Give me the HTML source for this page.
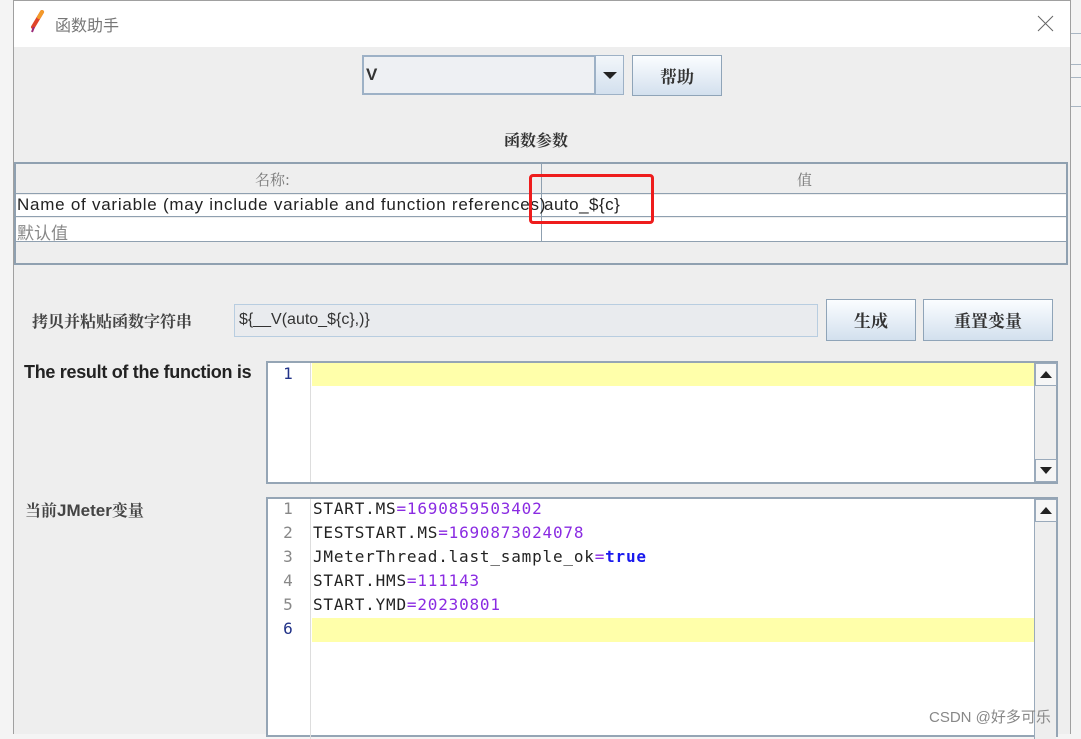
<!DOCTYPE html>
<html><head><meta charset="utf-8"><style>
*{margin:0;padding:0;box-sizing:border-box}
body{width:1081px;height:734px;overflow:hidden;background:#f4f4f4;position:relative;font-family:"Liberation Sans","Noto Sans CJK SC",sans-serif}
.a{position:absolute}
.win{left:13px;top:0;width:1058px;height:734px;background:#eeeeee;border-left:1px solid #a0a0a0;border-right:1px solid #a0a0a0;border-top:1px solid #a0a0a0}
.title{left:14px;top:1px;width:1056px;height:46px;background:#fff}
.btn{border:1px solid #8fa4b8;background:linear-gradient(#fbfdff,#d3e0ee);font-family:"Noto Serif CJK SC",serif;font-weight:bold;font-size:17px;color:#333;text-align:center}
.cell{font-size:17px;color:#222;white-space:nowrap}
.mono{font-family:"DejaVu Sans Mono","Liberation Mono",monospace;font-size:16px;letter-spacing:0.8px;color:#222}
.num{color:#8a2be2}
.ln{font-family:"DejaVu Sans Mono",monospace;font-size:16px;color:#888;width:40px;text-align:center}
.sb{background:#eee;border-left:1px solid #9aaabb}
.arr{width:22px;height:23px;background:#f6f6f6;border:1px solid #9aaabb;display:flex;align-items:center;justify-content:center}
</style></head><body>
<div class="a" style="left:1070px;top:33px;width:11px;height:1px;background:#a9b6c3"></div>
<div class="a" style="left:1070px;top:64px;width:11px;height:1px;background:#a9b6c3"></div>
<div class="a" style="left:1070px;top:77px;width:11px;height:1px;background:#a9b6c3"></div>
<div class="a" style="left:1070px;top:106px;width:11px;height:1px;background:#a9b6c3"></div>
<div class="a win"></div>
<div class="a title"></div>
<svg class="a" style="left:28px;top:10px" width="18" height="24"><path d="M14 2 L5 17" stroke="#e0442a" stroke-width="4" stroke-linecap="round"/><path d="M14 2 L11 7" stroke="#f39a2a" stroke-width="4" stroke-linecap="round"/><path d="M6 17 L4 22" stroke="#9a2a7a" stroke-width="2"/></svg>
<div class="a" style="left:55px;top:12px;font-size:16px;color:#777">函数助手</div>
<svg class="a" style="left:1037px;top:15px" width="17" height="17"><path d="M1 1L16 16M16 1L1 16" stroke="#666" stroke-width="1"/></svg>

<div class="a" style="left:362px;top:55px;width:234px;height:40px;background:#eef0f3;border:2px solid #9db1c6;font-weight:bold;font-size:17px;padding:8px 2px;color:#333">V</div>
<div class="a" style="left:595px;top:55px;width:29px;height:40px;background:linear-gradient(#f2f6fa,#d3e0ee);border:1px solid #9db1c6"><svg style="position:absolute;left:6px;top:15px" width="16" height="9"><path d="M1 1H15L8 8Z" fill="#222"/></svg></div>
<div class="a btn" style="left:632px;top:55px;width:90px;height:41px;line-height:39px">帮助</div>

<div class="a" style="left:504px;top:128px;font-family:'Noto Serif CJK SC',serif;font-weight:bold;font-size:16px;color:#333">函数参数</div>

<div class="a" style="left:14px;top:162px;width:1054px;height:103px;border:2px solid #8fa0b0;background:#eee"></div>
<div class="a" style="left:16px;top:164px;width:1050px;height:30px;border-bottom:1px solid #8fa0b0"></div>
<div class="a" style="left:16px;top:195px;width:1050px;height:22px;background:#fff;border-bottom:1px solid #8fa0b0"></div>
<div class="a" style="left:16px;top:218px;width:1050px;height:24px;background:#fff;border-bottom:1px solid #8fa0b0"></div>
<div class="a" style="left:541px;top:164px;width:1px;height:78px;background:#8fa0b0"></div>
<div class="a cell" style="left:255px;top:169px;color:#777;font-family:'Noto Serif CJK SC',serif;font-size:15px">名称:</div>
<div class="a cell" style="left:797px;top:169px;color:#777;font-family:'Noto Serif CJK SC',serif;font-size:15px">值</div>
<div class="a cell" style="left:17px;top:195px;letter-spacing:0.75px">Name of variable (may include variable and function references)</div>
<div class="a cell" style="left:544px;top:195px;letter-spacing:0.5px">auto_${c}</div>
<div class="a cell" style="left:17px;top:219px;color:#888">默认值</div>
<div class="a" style="left:529px;top:174px;width:125px;height:50px;border:3px solid #ee1c1c;border-radius:4px"></div>

<div class="a" style="left:32px;top:309px;font-family:'Noto Serif CJK SC',serif;font-weight:bold;font-size:16px;color:#444">拷贝并粘贴函数字符串</div>
<div class="a" style="left:234px;top:304px;width:584px;height:33px;border:1px solid #b8cde0;background:#e9ebee;font-size:16px;padding:6px 4px;color:#333">${__V(auto_${c},)}</div>
<div class="a btn" style="left:826px;top:299px;width:90px;height:42px;line-height:40px">生成</div>
<div class="a btn" style="left:923px;top:299px;width:130px;height:42px;line-height:40px">重置变量</div>

<div class="a" style="left:24px;top:362px;font-weight:bold;font-size:18px;color:#222;letter-spacing:-0.3px">The result of the function is</div>
<div class="a" style="left:266px;top:361px;width:792px;height:123px;border:2px solid #95a5b5;background:#fff"></div>
<div class="a" style="left:268px;top:363px;width:43px;height:119px;background:#fff;border-right:1px solid #ddd"></div>
<div class="a" style="left:312px;top:363px;width:722px;height:23px;background:#ffffaa"></div>
<div class="a ln" style="left:268px;top:364px;color:#223388">1</div>
<div class="a sb" style="left:1034px;top:363px;width:22px;height:119px"></div>
<div class="a arr" style="left:1035px;top:363px"><svg width="12" height="7"><path d="M0 7H12L6 0Z" fill="#222"/></svg></div>
<div class="a arr" style="left:1035px;top:459px"><svg width="12" height="7"><path d="M0 0H12L6 7Z" fill="#222"/></svg></div>

<div class="a" style="left:25px;top:498px;font-family:'Noto Serif CJK SC',serif;font-weight:bold;font-size:16px;color:#444">当前<span style="font-family:'Liberation Sans';font-size:17px">JMeter</span>变量</div>
<div class="a" style="left:266px;top:497px;width:792px;height:240px;border:2px solid #95a5b5;background:#fff"></div>
<div class="a" style="left:268px;top:499px;width:43px;height:240px;border-right:1px solid #ddd"></div>
<div class="a" style="left:312px;top:618px;width:722px;height:24px;background:#ffffaa"></div>
<div class="a ln" style="left:268px;top:497px;line-height:24px">1<br>2<br>3<br>4<br>5<br><span style="color:#223388">6</span></div>
<div class="a mono" style="left:313px;top:497px;line-height:24px;white-space:pre">START.MS<span class="num">=1690859503402</span>
TESTSTART.MS<span class="num">=1690873024078</span>
JMeterThread.last_sample_ok<span class="num">=</span><b style="color:#1a1aee">true</b>
START.HMS<span class="num">=111143</span>
START.YMD<span class="num">=20230801</span></div>
<div class="a sb" style="left:1034px;top:499px;width:22px;height:240px"></div>
<div class="a arr" style="left:1035px;top:499px"><svg width="12" height="7"><path d="M0 7H12L6 0Z" fill="#222"/></svg></div>
<div class="a" style="left:929px;top:706px;font-size:15px;color:#888">CSDN @好多可乐</div>
</body></html>
